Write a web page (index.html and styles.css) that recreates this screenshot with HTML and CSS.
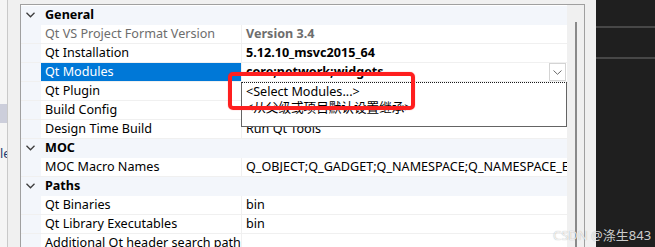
FILE: index.html
```html
<!DOCTYPE html>
<html lang="zh-CN">
<head>
    <meta charset="UTF-8">
    <title>Qt Project Settings</title>
    <link rel="stylesheet" href="styles.css">
</head>
<body>
    <div class="screen">
        <div class="side">
            <div class="side-sel"></div>
            <div class="side-label">le</div>
        </div>

        <div class="grid-frame">
            <div class="grid">
                <div class="row cat">
                    <span class="gutter"><svg width="9" height="6" viewBox="0 0 9 6"><polyline points="0.5,0.8 4.5,4.8 8.5,0.8" fill="none" stroke="#3c3c3c" stroke-width="1.3"/></svg></span>
                    <span class="name">General</span>
                </div>
                <div class="row ro">
                    <span class="gutter"></span>
                    <span class="name">Qt VS Project Format Version</span>
                    <span class="value strong">Version 3.4</span>
                </div>
                <div class="row">
                    <span class="gutter"></span>
                    <span class="name">Qt Installation</span>
                    <span class="value strong">5.12.10_msvc2015_64</span>
                </div>
                <div class="row selected">
                    <span class="gutter"></span>
                    <span class="name">Qt Modules</span>
                    <span class="value strong">
                        <span class="value-text">core;network;widgets</span>
                        <span class="drop-btn"><svg width="9" height="5" viewBox="0 0 9 5"><polyline points="0.5,0.5 4.5,4.3 8.5,0.5" fill="none" stroke="#6a6a6a" stroke-width="1"/></svg></span>
                    </span>
                </div>
                <div class="row">
                    <span class="gutter"></span>
                    <span class="name">Qt Plugin</span>
                    <span class="value"></span>
                </div>
                <div class="row">
                    <span class="gutter"></span>
                    <span class="name">Build Config</span>
                    <span class="value"></span>
                </div>
                <div class="row">
                    <span class="gutter"></span>
                    <span class="name">Design Time Build</span>
                    <span class="value">Run Qt Tools</span>
                </div>
                <div class="row cat">
                    <span class="gutter"><svg width="9" height="6" viewBox="0 0 9 6"><polyline points="0.5,0.8 4.5,4.8 8.5,0.8" fill="none" stroke="#3c3c3c" stroke-width="1.3"/></svg></span>
                    <span class="name">MOC</span>
                </div>
                <div class="row">
                    <span class="gutter"></span>
                    <span class="name">MOC Macro Names</span>
                    <span class="value">Q_OBJECT;Q_GADGET;Q_NAMESPACE;Q_NAMESPACE_EXPORT</span>
                </div>
                <div class="row cat">
                    <span class="gutter"><svg width="9" height="6" viewBox="0 0 9 6"><polyline points="0.5,0.8 4.5,4.8 8.5,0.8" fill="none" stroke="#3c3c3c" stroke-width="1.3"/></svg></span>
                    <span class="name">Paths</span>
                </div>
                <div class="row">
                    <span class="gutter"></span>
                    <span class="name">Qt Binaries</span>
                    <span class="value">bin</span>
                </div>
                <div class="row">
                    <span class="gutter"></span>
                    <span class="name">Qt Library Executables</span>
                    <span class="value">bin</span>
                </div>
                <div class="row">
                    <span class="gutter"></span>
                    <span class="name">Additional Qt header search paths</span>
                    <span class="value"></span>
                </div>

                <!-- 下拉列表 -->
                <div class="popup">
                    <div class="popup-item">&lt;Select Modules...&gt;</div>
                    <div class="popup-item">&lt;从父级或项目默认设置继承&gt;</div>
                </div>
            </div>
            <div class="vscroll"><div class="thumb"></div></div>
        </div>

        <div class="dark">
            <div class="dark-bar top"></div>
            <div class="dark-bar mid"></div>
        </div>
    </div>

    <!-- 标注框 -->
    <div class="mark"></div>
    <div class="watermark">CSDN @涤生843</div>
</body>
</html>
```

FILE: styles.css
```css
body {
    margin: 0;
    width: 655px;
    height: 247px;
    overflow: hidden;
    position: relative;
    background-color: #f0f0f0;
    font-family: "Noto Sans", "Noto Sans CJK SC", sans-serif;
    font-size: 12.6px;
    color: #000;
}
.screen {
    display: flex;
    height: 247px;
    overflow: hidden;
}
.side {
    width: 7px;
    border-right: 1px solid #c9c9c9;
    background: #f5f5f5;
    overflow: hidden;
    padding-top: 104px;
}
.side-sel {
    height: 19px;
    background: #cccedb;
}
.side-label {
    margin-top: 24px;
    color: #1e3a6e;
    line-height: 14px;
    white-space: nowrap;
}
.grid-frame {
    margin: 4px 0 0 12px;
    width: 563px;
    border: 1px solid #a0a0a0;
    border-bottom: none;
    display: flex;
    background: #f0f0f0;
}
.grid {
    position: relative;
    width: 546px;
    padding-top: 1px;
    background: #fff;
}
.row {
    display: flex;
    height: 18px;
    line-height: 18px;
    border-bottom: 1px solid #f0f0f0;
    white-space: nowrap;
}
.gutter {
    width: 20px;
    flex: none;
    background: #f3f6fb;
    display: flex;
    align-items: center;
    padding-left: 5px;
    box-sizing: border-box;
}
.name {
    width: 200px;
    flex: none;
    padding-left: 4px;
    box-sizing: border-box;
    overflow: hidden;
}
.value {
    flex: 1;
    display: flex;
    border-left: 1px solid #f0f0f0;
    padding-left: 4px;
    overflow: hidden;
}
.value-text {
    flex: 1;
}
.strong {
    font-weight: 700;
}
.ro .name,
.ro .value {
    color: #6d6d6d;
}
.cat {
    background: #f3f6fb;
    border-bottom-color: #f3f6fb;
}
.cat .name {
    font-weight: 700;
}
.selected .name {
    background: #0078d7;
    color: #fff;
}
.drop-btn {
    width: 15px;
    height: 16px;
    margin: 0 1px 0 0;
    border: 1px solid #d4d4d4;
    display: flex;
    align-items: center;
    justify-content: center;
}
.popup {
    position: absolute;
    left: 220px;
    top: 77px;
    width: 326px;
    height: 45px;
    box-sizing: border-box;
    background: #fff;
    border: 1px solid #646464;
    border-top: 1px dotted #1a1a1a;
    padding-top: 1px;
}
.popup-item {
    height: 16px;
    line-height: 16px;
    padding-left: 4px;
    white-space: nowrap;
}
.vscroll {
    width: 17px;
    padding-top: 17px;
    display: flex;
    justify-content: center;
}
.thumb {
    width: 2px;
    height: 240px;
    background: #8a8a8a;
}
.dark {
    margin-left: 11px;
    flex: 1;
    background: #1f1f1f;
}
.dark-bar {
    border-bottom: 2px solid #474747;
}
.dark-bar.top {
    height: 26px;
}
.dark-bar.mid {
    height: 29px;
}
.mark {
    position: absolute;
    left: 228px;
    top: 72px;
    width: 179px;
    height: 30px;
    border: 4px solid #ff1f1f;
    border-radius: 5px;
    box-shadow: 0 0 1px rgba(255, 0, 0, 0.6);
}
.watermark {
    position: absolute;
    left: 553px;
    top: 225px;
    font-size: 13px;
    color: rgba(255, 255, 255, 0.8);
    text-shadow: 0 0 1px rgba(0, 0, 0, 0.35);
    white-space: nowrap;
}
```
